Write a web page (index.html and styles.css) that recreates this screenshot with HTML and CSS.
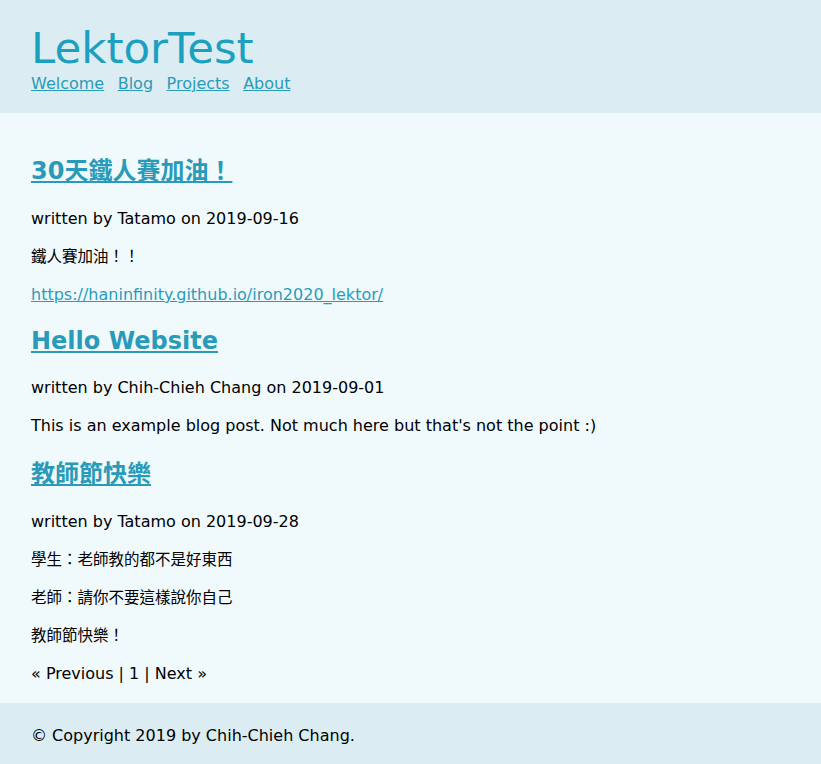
FILE: index.html
```
<!DOCTYPE html>
<html lang="zh-Hant">
<head>
<meta charset="utf-8">
<title>LektorTest</title>
<link rel="stylesheet" href="styles.css">
</head>
<body>
<header class="site-header">
  <h1 class="site-title">LektorTest</h1>
  <nav class="site-nav">
    <a href="#">Welcome</a>
    <a href="#">Blog</a>
    <a href="#">Projects</a>
    <a href="#">About</a>
  </nav>
</header>
<main class="page">
  <article class="post">
    <h2 class="post-title cjk-title"><a href="#">30天鐵人賽加油！</a></h2>
    <p class="meta">written by Tatamo on 2019-09-16</p>
    <p class="cjk">鐵人賽加油！！</p>
    <p><a href="#">https://haninfinity.github.io/iron2020_lektor/</a></p>
  </article>
  <article class="post">
    <h2 class="post-title"><a href="#">Hello Website</a></h2>
    <p class="meta">written by Chih-Chieh Chang on 2019-09-01</p>
    <p>This is an example blog post. Not much here but that's not the point :)</p>
  </article>
  <article class="post">
    <h2 class="post-title cjk-title"><a href="#">教師節快樂</a></h2>
    <p class="meta">written by Tatamo on 2019-09-28</p>
    <p class="cjk">學生：老師教的都不是好東西</p>
    <p class="cjk">老師：請你不要這樣說你自己</p>
    <p class="cjk">教師節快樂！</p>
  </article>
  <div class="pagination">« Previous | 1 | Next »</div>
</main>
<footer class="site-footer">© Copyright 2019 by Chih-Chieh Chang.</footer>
</body>
</html>
```

FILE: styles.css
```
html {
  background: #f0fafd;
}
body {
  margin: 0;
  font-family: "DejaVu Sans", Verdana, "Noto Sans CJK TC", sans-serif;
  font-size: 16px;
  line-height: 22px;
  color: #000;
  background: #f0fafd;
}
a {
  color: #2a9ab9;
}
.site-header {
  background: #dbedf3;
  padding: 24px 31px 18px;
}
.site-title {
  margin: 0;
  font-size: 43.5px;
  line-height: 49px;
  font-weight: normal;
  color: #1ca0c0;
}
.site-nav {
  display: flex;
  gap: 13.5px;
}
.page {
  display: block;
  padding: 21px 31px 18px;
}
.post-title {
  font-size: 24px;
  line-height: 31px;
  margin: 20px 0;
  font-weight: bold;
}
.cjk-title {
  line-height: 34px;
}
p {
  margin: 16px 0;
}
.cjk {
  font-size: 15.5px;
}
.pagination {
  margin-top: 16px;
}
.site-footer {
  background: #dbedf3;
  padding: 22px 31px 20px;
}
```
